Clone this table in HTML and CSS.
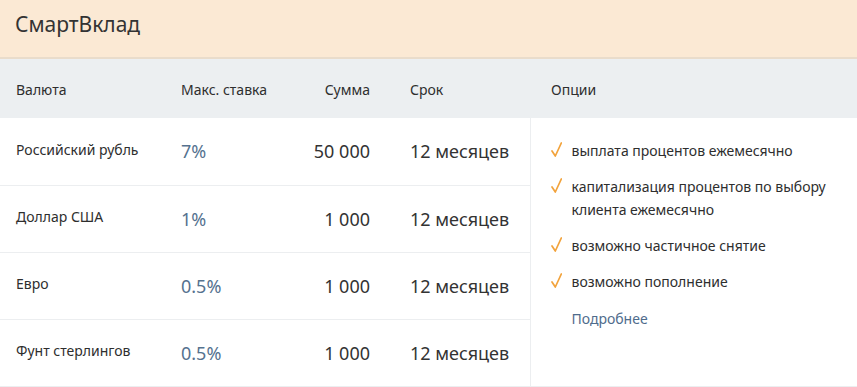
FILE: index.html
```html
<!DOCTYPE html>
<html lang="ru">
<head>
<meta charset="utf-8">
<link rel="stylesheet" href="styles.css">
</head>
<body>
<div class="card">
  <div class="card-head">СмартВклад</div>
  <table class="deposits">
    <colgroup>
      <col class="c-cur"><col class="c-rate"><col class="c-sum"><col class="c-term"><col class="c-opt">
    </colgroup>
    <thead>
      <tr>
        <th>Валюта</th>
        <th>Макс. ставка</th>
        <th class="num">Сумма</th>
        <th>Срок</th>
        <th class="opt-h">Опции</th>
      </tr>
    </thead>
    <tbody>
      <tr>
        <td class="cur">Российский рубль</td>
        <td class="rate">7%</td>
        <td class="num sum">50 000</td>
        <td class="term">12 месяцев</td>
        <td class="options" rowspan="4">
          <ul class="opt-list">
            <li>выплата процентов ежемесячно</li>
            <li>капитализация процентов по выбору клиента ежемесячно</li>
            <li>возможно частичное снятие</li>
            <li>возможно пополнение</li>
          </ul>
          <a class="more" href="#">Подробнее</a>
        </td>
      </tr>
      <tr>
        <td class="cur">Доллар США</td>
        <td class="rate">1%</td>
        <td class="num sum">1 000</td>
        <td class="term">12 месяцев</td>
      </tr>
      <tr>
        <td class="cur">Евро</td>
        <td class="rate">0.5%</td>
        <td class="num sum">1 000</td>
        <td class="term">12 месяцев</td>
      </tr>
      <tr>
        <td class="cur">Фунт стерлингов</td>
        <td class="rate">0.5%</td>
        <td class="num sum">1 000</td>
        <td class="term">12 месяцев</td>
      </tr>
    </tbody>
  </table>
</div>
</body>
</html>
```
FILE: styles.css
```css
html, body {
  margin: 0;
  padding: 0;
  background: #ffffff;
}
body {
  font-family: "Noto Sans", "Open Sans", sans-serif;
  color: #2e2e2e;
}
.card {
  width: 857px;
}
.card-head {
  height: 59px;
  box-sizing: border-box;
  padding: 10px 0 0 15px;
  background: #fbe9d4;
  border-bottom: 2px solid #e9dccb;
  font-size: 21px;
  line-height: 28px;
  color: #333333;
}
.deposits {
  width: 857px;
  border-collapse: collapse;
  table-layout: fixed;
}
.c-cur { width: 165px; }
.c-rate { width: 125px; }
.c-sum { width: 104px; }
.c-term { width: 136px; }
.c-opt { width: 327px; }

.deposits th {
  height: 59px;
  box-sizing: border-box;
  background: #eceff1;
  font-weight: normal;
  font-size: 14px;
  text-align: left;
  padding: 2px 0 0 16px;
  color: #2e2e2e;
}
.deposits th.num { text-align: right; padding-right: 24px; padding-left: 0; }
.deposits th.opt-h { padding-left: 21px; }

.deposits td {
  height: 67px;
  box-sizing: border-box;
  border-bottom: 1px solid #eceef0;
  padding: 0 0 0 16px;
  vertical-align: middle;
  line-height: 24px;
}
.cur {
  font-size: 14px;
  padding-bottom: 3px !important;
}
.rate {
  font-size: 18px;
  color: #55728f;
}
.sum {
  font-size: 18px;
  text-align: right;
  padding: 0 24px 0 0 !important;
  color: #333333;
}
.term {
  font-size: 18px;
  color: #333333;
}
.deposits td.options {
  vertical-align: top;
  border-left: 1px solid #eceef0;
  padding: 21px 20px 0 20px;
}
.opt-list {
  list-style: none;
  margin: 0;
  padding: 0;
}
.opt-list li {
  position: relative;
  padding-left: 21px;
  font-size: 14px;
  line-height: 23px;
  margin-bottom: 13px;
}
.opt-list li::before {
  content: "";
  position: absolute;
  left: 0;
  top: 3px;
  width: 11px;
  height: 15px;
  background: url("data:image/svg+xml,%3Csvg xmlns='http://www.w3.org/2000/svg' width='11' height='15' viewBox='0 0 11 15'%3E%3Cpath d='M1 9 L4.3 14 L10.3 1' fill='none' stroke='%23f2a33c' stroke-width='1.7' stroke-linecap='round' stroke-linejoin='round'/%3E%3C/svg%3E") no-repeat;
}
.more {
  display: inline-block;
  margin: 1px 0 0 21px;
  font-size: 14px;
  line-height: 23px;
  color: #4f6c8c;
  text-decoration: none;
}
```
